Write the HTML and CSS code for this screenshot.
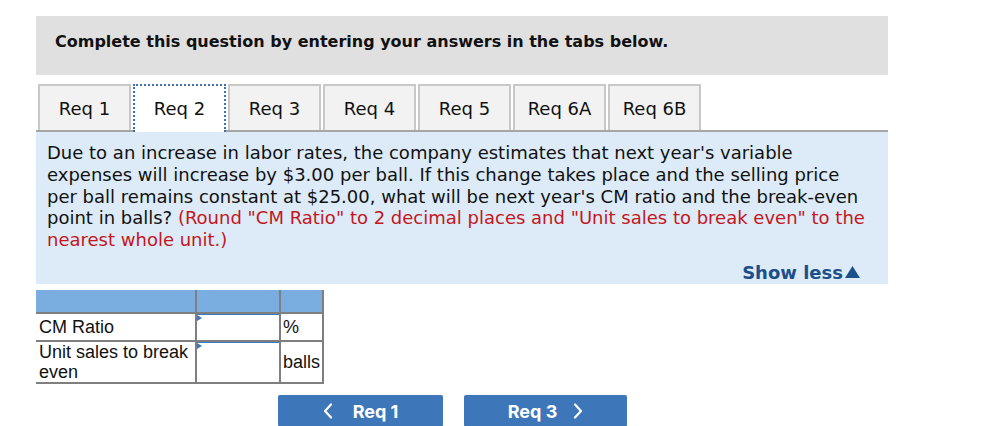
FILE: index.html
```html
<!DOCTYPE html>
<html>
<head>
<meta charset="utf-8">
<link rel="stylesheet" href="styles.css">
</head>
<body>
<div class="wrap">
  <div class="instr">Complete this question by entering your answers in the tabs below.</div>
  <div class="tabs">
    <div class="tab">Req 1</div>
    <div class="tab active">Req 2</div>
    <div class="tab">Req 3</div>
    <div class="tab">Req 4</div>
    <div class="tab">Req 5</div>
    <div class="tab">Req 6A</div>
    <div class="tab">Req 6B</div>
  </div>
  <div class="panel">
    <p class="q">Due to an increase in labor rates, the company estimates that next year's variable expenses will increase by $3.00 per ball. If this change takes place and the selling price per ball remains constant at $25.00, what will be next year's CM ratio and the break-even point in balls? <span class="red">(Round "CM Ratio" to 2 decimal places and "Unit sales to break even" to the nearest whole unit.)</span></p>
    <div class="more"><span class="showless">Show less</span><svg class="tri" width="15" height="12" viewBox="0 0 15 12"><polygon points="7.5,0 15,12 0,12" fill="#1b4f8a"/></svg></div>
  </div>
  <table class="grid">
    <tr class="head"><td class="c1"></td><td class="c2"></td><td class="c3"></td></tr>
    <tr class="r1"><td class="c1">CM Ratio</td><td class="c2 inp"><span class="mark"></span></td><td class="c3">%</td></tr>
    <tr class="r2"><td class="c1">Unit sales to break even</td><td class="c2 inp"><span class="mark"></span></td><td class="c3">balls</td></tr>
  </table>
  <div class="nav">
    <div class="btn prev"><svg class="chev" width="10" height="16" viewBox="0 0 10 16"><polyline points="8,1.5 2,8 8,14.5" fill="none" stroke="#fff" stroke-width="2.2" stroke-linecap="round" stroke-linejoin="round"/></svg><span>Req 1</span></div>
    <div class="btn next"><span>Req 3</span><svg class="chev" width="10" height="16" viewBox="0 0 10 16"><polyline points="2,1.5 8,8 2,14.5" fill="none" stroke="#fff" stroke-width="2.2" stroke-linecap="round" stroke-linejoin="round"/></svg></div>
  </div>
</div>
</body>
</html>
```
FILE: styles.css
```css
html, body { margin: 0; padding: 0; background: #fff; }
body { font-family: "DejaVu Sans", Verdana, sans-serif; color: #111; }
.wrap { margin-left: 36px; width: 852px; padding-top: 16px; }
.instr {
  background: #e0e0e0;
  height: 59px;
  box-sizing: border-box;
  padding: 16px 0 0 19px;
  font-weight: bold;
  font-size: 16px;
  color: #111;
}
.tabs {
  display: flex;
  gap: 2px;
  margin-top: 9px;
  padding-left: 2px;
  border-bottom: 2px solid #a6a6a6;
  height: 46px;
}
.tab {
  width: 93px;
  box-sizing: border-box;
  border: 2px solid #c8c8c8;
  border-bottom: none;
  background: #f2f2f2;
  display: flex;
  align-items: center;
  justify-content: center;
  font-size: 18px;
  color: #111;
  padding-top: 1px;
}
.tab.active {
  background: #fff;
  border: 2px dotted #3a6fb8;
  border-bottom: none;
  height: 48px;
  margin-bottom: -2px;
  padding-bottom: 2px;
  position: relative;
  z-index: 1;
}
.panel {
  background: #dcebf7;
  padding: 10px 17px 1px 11px;
  height: 152px;
  box-sizing: border-box;
  display: flex;
  flex-direction: column;
}
.q { margin: 0; font-size: 18px; line-height: 21.8px; color: #111; }
.red { color: #c4161c; }
.more { margin-top: auto; margin-right: 11px; display: flex; justify-content: flex-end; align-items: center; line-height: 21px; }
.showless { color: #1b4f8a; font-weight: bold; font-size: 18px; }
.tri { margin-left: 2px; margin-bottom: 2px; }
.grid {
  border-collapse: collapse;
  margin-top: 6px;
  font-family: "Liberation Sans", Arial, sans-serif;
  font-size: 18px;
  color: #111;
}
.grid td { border: 2px solid #7f7f7f; padding: 0 1px 0 3px; }
.grid tr:first-child td { border-top: none; }
.grid td.c1 { border-left: none; width: 155px; }
.grid td.c2 { width: 78px; }
.grid td.c3 { width: 36px; padding: 0 2px; border-right: 2px solid #7f7f7f; }
.head td { background: #7aaee0; height: 22px; border-bottom: 2px solid #7f7f7f; }
.r1 td { height: 26px; }
.r2 td { height: 40px; line-height: 20px; }
.grid tr:last-child td { border-bottom: 2px solid #7f7f7f; }
.inp { position: relative; border-left: 2px solid #3a78c2 !important; box-shadow: inset 0 1px 0 #3a78c2; }
.mark {
  position: absolute; left: 0; top: 1px;
  width: 0; height: 0;
  border-top: 3px solid transparent;
  border-bottom: 3px solid transparent;
  border-left: 5px solid #3a78c2;
}
.nav { display: flex; gap: 21px; margin-top: 11px; margin-left: 242px; }
.btn {
  width: 165px; height: 32px;
  background: #3d76b9;
  border-radius: 2px;
  color: #fff;
  font-family: Inter, "Liberation Sans", sans-serif;
  font-weight: bold;
  font-size: 18px;
  display: flex; align-items: center; justify-content: center;
  gap: 20px;
}
.btn.next { width: 163px; gap: 16px; }
.chev { display: block; }
```
